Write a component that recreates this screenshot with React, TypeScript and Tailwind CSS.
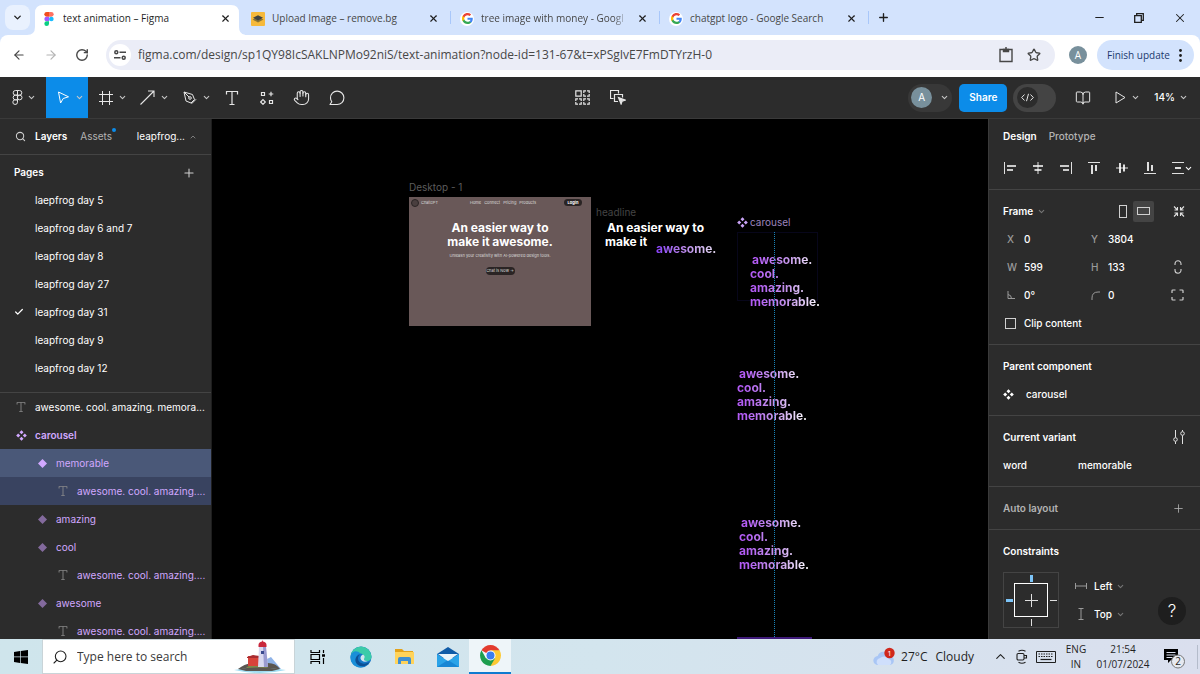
import React, { useState } from 'react';
import {
  ArrowLeft,
  ArrowRight,
  BookOpen,
  Check,
  ChevronDown,
  ChevronUp,
  Hand,
  Minus,
  Plus,
  RotateCw,
  Search,
  Star,
  X,
} from 'lucide-react';

const tabs = [
  { title: 'text animation – Figma', icon: 'figma', style: 'text-[#1f1f1f]' },
  { title: 'Upload Image – remove.bg', icon: 'removebg', style: 'text-[#474747]' },
  { title: 'tree image with money - Googl', icon: 'google', style: 'text-[#474747] mask-r-from-90%' },
  { title: 'chatgpt logo - Google Search', icon: 'google', style: 'text-[#474747]' },
];

const pages = [
  'laepfrog day 5',
  'leapfrog day 6 and 7',
  'leapfrog day 8',
  'leapfrog day 27',
  'leapfrog day 31',
  'leapfrog day 9',
  'leapfrog day 12',
];

const layers = [
  { name: 'awesome. cool. amazing. memora...', icon: 'text', row: 'pl-[14px]', text: 'text-white' },
  { name: 'carousel', icon: 'set', row: 'pl-[14px]', text: 'text-[#d1a8ff] font-semibold' },
  { name: 'memorable', icon: 'variant', row: 'pl-[35px] bg-[#4a5878]', text: 'text-[#d1a8ff]' },
  { name: 'awesome. cool. amazing....', icon: 'text', row: 'pl-[56px] bg-[#394360]', text: 'text-[#d1a8ff]' },
  { name: 'amazing', icon: 'dim', row: 'pl-[35px]', text: 'text-[#d1a8ff]' },
  { name: 'cool', icon: 'dim', row: 'pl-[35px]', text: 'text-[#d1a8ff]' },
  { name: 'awesome. cool. amazing....', icon: 'text', row: 'pl-[56px]', text: 'text-[#d1a8ff]' },
  { name: 'awesome', icon: 'dim', row: 'pl-[35px]', text: 'text-[#d1a8ff]' },
  { name: 'awesome. cool. amazing....', icon: 'text', row: 'pl-[56px]', text: 'text-[#d1a8ff]' },
];

/* ---------- icons ---------- */

function FigmaLogo() {
  return (
    <svg width="10" height="14" viewBox="0 0 20 30">
      <path d="M5 0h5v10H5A5 5 0 0 1 5 0z" fill="#f24e1e" />
      <path d="M10 0h5a5 5 0 0 1 0 10h-5z" fill="#ff7262" />
      <path d="M5 10h5v10H5a5 5 0 0 1 0-10z" fill="#a259ff" />
      <circle cx="15" cy="15" r="5" fill="#1abcfe" />
      <path d="M5 20h5v5a5 5 0 1 1-5-5z" fill="#0acf83" />
    </svg>
  );
}

function GoogleLogo() {
  return (
    <span className="flex size-[14px] items-center justify-center rounded-full bg-white">
      <svg width="11" height="11" viewBox="0 0 24 24">
        <path d="M23.5 12.3c0-.9-.1-1.5-.2-2.2H12v4.5h6.5c-.3 1.6-1.2 2.9-2.5 3.7v3.1h4c2.3-2.2 3.5-5.3 3.5-9.1z" fill="#4285f4" />
        <path d="M12 24c3.2 0 6-1.1 7.9-2.9l-3.9-3.1c-1.1.7-2.4 1.2-4 1.2-3.1 0-5.8-2.1-6.7-4.9H1.3v3.2A12 12 0 0 0 12 24z" fill="#34a853" />
        <path d="M5.3 14.3a7.2 7.2 0 0 1 0-4.6V6.5H1.3a12 12 0 0 0 0 11z" fill="#fbbc05" />
        <path d="M12 4.8c1.8 0 3.3.6 4.6 1.8l3.4-3.4A12 12 0 0 0 1.3 6.5l4 3.2C6.2 6.9 8.9 4.8 12 4.8z" fill="#ea4335" />
      </svg>
    </span>
  );
}

function RemoveBgLogo() {
  return (
    <svg width="14" height="14" viewBox="0 0 14 14">
      <rect width="14" height="14" rx="1" fill="#f6b93b" />
      <path d="M1.5 7.5 7 5l5.5 2.500L7 10.5z" fill="#8a7433" />
      <path d="M2 5.8 7 3.3l5 2.500-5 2.800z" fill="#3f4342" />
    </svg>
  );
}

function Favicon({ icon }: { icon: string }) {
  return (
    <span className="flex w-4 shrink-0 justify-center">
      {icon === 'figma' && <FigmaLogo />}
      {icon === 'removebg' && <RemoveBgLogo />}
      {icon === 'google' && <GoogleLogo />}
    </span>
  );
}

function Caret({ className = 'text-[#c8c8c8]' }: { className?: string }) {
  return <ChevronDown size={9} strokeWidth={2.8} className={`shrink-0 ${className}`} />;
}

function FigmaMark() {
  return (
    <svg width="11" height="15" viewBox="0 0 11 15" fill="none" stroke="#e6e6e6">
      <path d="M5.5.5h-2a2.33 2.33 0 0 0 0 4.67h2zM5.5.5h2a2.33 2.33 0 0 1 0 4.67h-2zM5.5 5.17h-2a2.33 2.33 0 0 0 0 4.66h2zM5.5 9.83h-2a2.33 2.33 0 1 0 2 2.33z" />
      <circle cx="7.7" cy="7.5" r="2.33" />
    </svg>
  );
}

function MoveIcon() {
  return (
    <svg width="13" height="13" viewBox="0 0 13 13" fill="none" stroke="#fff" strokeLinejoin="round">
      <path d="M1.5 1 11.5 5.8 6.2 7.5 3.6 12z" />
    </svg>
  );
}

function FrameIcon() {
  return (
    <svg width="14" height="14" viewBox="0 0 14 14" stroke="#e6e6e6">
      <path d="M3.5 0v14M10.5 0v14M0 3.5h14M0 10.5h14" />
    </svg>
  );
}

function ArrowIcon() {
  return (
    <svg width="15" height="15" viewBox="0 0 15 15" fill="none" stroke="#e6e6e6" strokeWidth="1.1">
      <path d="M.5 14.5 14 1M8 1h6v6" />
    </svg>
  );
}

function PenIcon() {
  return (
    <svg width="14" height="14" viewBox="0 0 14 14" fill="none" stroke="#e6e6e6" strokeLinejoin="round">
      <path d="M1 1l8.500 2.500 2 5-3.500 3.500-5-2zM1 1l5.200 5.200M8.500 12.800l4.500-4.500" />
      <circle cx="7" cy="7" r="1.3" />
    </svg>
  );
}

function TextIcon({ size = 14, color = '#e6e6e6' }: { size?: number; color?: string }) {
  return (
    <svg width={size} height={size} viewBox="0 0 14 14" fill="none" stroke={color} strokeWidth="1.2">
      <path d="M1.5 3.5v-3h11v3M7 .5v13M4.500 13.5h5" />
    </svg>
  );
}

function ResourcesIcon() {
  return (
    <svg width="14" height="14" viewBox="0 0 14 14" fill="none" stroke="#e6e6e6" strokeWidth="1.2">
      <path d="M1.500 1.500h3v3h-3zM9.500 9.500h3v3h-3zM11 .7v4.600M8.700 3h4.600M3 8.700 5.300 11 3 13.300.7 11z" />
    </svg>
  );
}

function CommentIcon() {
  return (
    <svg width="16" height="16" viewBox="0 0 16 16" fill="none" stroke="#e6e6e6" strokeWidth="1.1">
      <path d="M1 14.500h7.200A6.700 6.700 0 1 0 1.500 8c0 1.500.5 2.700 1.300 3.800L1 14.500z" strokeLinejoin="round" />
    </svg>
  );
}

function GridIcon() {
  return (
    <svg width="15" height="15" viewBox="0 0 15 15" fill="none" stroke="#e6e6e6" strokeWidth="1.2">
      <path d="M.8.8h5.400v5.400H.8z" />
      <path d="M8.800 3V.8H11M12 .8h2.200V3M14.200 4v2.200H12M11 6.200H8.800V4M.8 11V8.800H3M4 8.800h2.200V11M6.200 12v2.200H4M3 14.200H.8V12M8.800 11V8.800H11M12 8.800h2.200V11M14.200 12v2.200H12M11 14.200H8.800V12" />
    </svg>
  );
}

function BooleanIcon() {
  return (
    <svg width="16" height="15" viewBox="0 0 16 15" fill="none" stroke="#e6e6e6" strokeWidth="1.2">
      <path d="M3.500 8.500h-3v-8h8v3M8 11.500H4.500v-7h8v3" />
      <path d="m8.500 7.500 6.500 2.600-2.900 1-1 2.900z" fill="#e6e6e6" />
    </svg>
  );
}

function ComponentSet({ color }: { color: string }) {
  return (
    <svg width="11" height="11" viewBox="0 0 12 12" fill={color}>
      <path d="M6 .2 8.200 2.400 6 4.600 3.800 2.400zM6 7.400 8.200 9.600 6 11.800 3.800 9.600zM2.400 3.800 4.600 6 2.400 8.200.2 6zM9.600 3.800 11.800 6 9.600 8.200 7.400 6z" />
    </svg>
  );
}

function Diamond({ color }: { color: string }) {
  return (
    <svg width="9" height="9" viewBox="0 0 10 10" fill={color}>
      <path d="M5 0l5 5-5 5-5-5z" />
    </svg>
  );
}

function LayerIcon({ icon }: { icon: string }) {
  return (
    <span className="flex w-[14px] shrink-0 justify-center">
      {icon === 'text' && <TextIcon size={10} color="#8c8c8c" />}
      {icon === 'set' && <ComponentSet color="#d1a8ff" />}
      {icon === 'variant' && <Diamond color="#d1a8ff" />}
      {icon === 'dim' && <Diamond color="#836a9d" />}
    </span>
  );
}

const alignIcons = [
  { label: 'Align left', d: 'M.5 0v12', bars: 'M3 4h9M3 8h6' },
  { label: 'Align horizontal centers', d: 'M6 0v12', bars: 'M1 4h10M2.5 8h7' },
  { label: 'Align right', d: 'M11.5 0v12', bars: 'M0 4h9M3 8h6' },
  { label: 'Align top', d: 'M0 .5h12', bars: 'M4 3v9M8 3v6' },
  { label: 'Align vertical centers', d: 'M0 6h12', bars: 'M4 1v10M8 2.5v7' },
  { label: 'Align bottom', d: 'M0 11.5h12', bars: 'M4 0v9M8 3v6' },
  { label: 'Distribute', d: 'M0 .5h12M0 11.5h12', bars: 'M3 6h6' },
];

/* ---------- browser ---------- */

function TabStrip() {
  return (
    <div className="flex h-[35px] shrink-0 bg-[#d3e3fd] pl-[5px]">
      <button aria-label="Search tabs" className="mt-[5px] mr-[3px] flex size-[25px] shrink-0 items-center justify-center rounded-lg bg-[#e9f1fe] text-[#1f1f1f]">
        <ChevronDown size={11} strokeWidth={3} />
      </button>
      {tabs.map((tab, i) => (
        <div key={i} className="relative flex w-[209px] min-w-0 items-end">
          {i === 0 && (
            <svg className="absolute -left-[6px] bottom-0" width="218" height="30" viewBox="0 0 218 30" fill="#fff">
              <path d="M0 30q8 0 8-8V8q0-8 8-8h188q8 0 8 8v14q0 8 8 8z" />
            </svg>
          )}
          <div className="relative flex h-[30px] min-w-0 flex-1 items-center gap-[6px] pr-[9px] pb-[3px] pl-2">
            <Favicon icon={tab.icon} />
            <span className={`flex-1 overflow-hidden text-[10px] whitespace-nowrap ${tab.style}`}>{tab.title}</span>
            <button aria-label="Close tab" className="flex size-4 shrink-0 items-center justify-center text-[#1f1f1f]">
              <X size={11} strokeWidth={2.5} />
            </button>
          </div>
          {i > 0 && <span className="mb-[11px] h-[13px] w-px bg-[#a8c7fa]" />}
        </div>
      ))}
      <button aria-label="New tab" className="flex w-[29px] items-center justify-center text-[#1f1f1f]">
        <Plus size={13} strokeWidth={2.5} />
      </button>
      <div className="ml-auto flex text-[#1f1f1f]">
        <button aria-label="Minimize" className="flex w-10 items-center justify-center"><Minus size={13} /></button>
        <button aria-label="Restore" className="flex w-10 items-center justify-center">
          <svg width="10" height="10" viewBox="0 0 10 10" fill="none" stroke="currentColor" strokeWidth="1.3">
            <path d="M.7 2.700h6.600v6.600H.7zM2.700 2.500V.7h6.600v6.600H7.500" />
          </svg>
        </button>
        <button aria-label="Close" className="flex w-[41px] items-center justify-center"><X size={14} strokeWidth={1.8} /></button>
      </div>
    </div>
  );
}

function AddressBar() {
  return (
    <div className="flex h-[42px] shrink-0 items-center rounded-t-lg bg-white pb-[2px]">
      <div className="flex w-[106px] shrink-0 justify-between pr-[17px] pl-3 text-[#474747]">
        <button aria-label="Back"><ArrowLeft size={14} /></button>
        <button aria-label="Forward" className="text-[#b4b4b4]"><ArrowRight size={14} /></button>
        <button aria-label="Reload"><RotateCw size={14} strokeWidth={2.4} /></button>
      </div>
      <div className="flex h-[30px] flex-1 items-center rounded-full bg-[#ebedf7] pr-[14px] pl-[3px]">
        <button aria-label="Site information" className="flex size-[22px] items-center justify-center rounded-full bg-white">
          <svg width="12" height="10" viewBox="0 0 12 10" fill="none" stroke="#474747" strokeWidth="1.5">
            <circle cx="2.3" cy="2.3" r="1.5" /><path d="M5.500 2.300H12M0 7.700h6.500" /><circle cx="9.7" cy="7.7" r="1.5" />
          </svg>
        </button>
        <input
          aria-label="Address"
          className="mx-[7px] min-w-0 flex-1 bg-transparent text-[12px] text-[#474747] outline-none"
          defaultValue="figma.com/design/sp1QY98IcSAKLNPMo92niS/text-animation?node-id=131-67&t=xPSgIvE7FmDTYrzH-0"
        />
        <button aria-label="Clipboard" className="mr-[14px]">
          <svg width="14" height="16" viewBox="0 0 14 16" fill="none" stroke="#474747" strokeWidth="1.4">
            <path d="M1 2.500h12v12H1z" /><path d="M4.500 2.500h5v2h-5z" fill="#474747" /><path d="M6 1h2" />
          </svg>
        </button>
        <button aria-label="Bookmark" className="text-[#474747]"><Star size={14} strokeWidth={2.3} /></button>
      </div>
      <button aria-label="Profile" className="mr-[10px] ml-[14px] flex size-[18px] items-center justify-center rounded-full bg-[#78909c] text-[10px] text-white">
        A
      </button>
      <button className="mr-[6px] flex h-[30px] w-[97px] items-center justify-between rounded-full bg-[#d3e3fd] pr-3 pl-[10px] text-[10px] whitespace-nowrap text-[#1c3a6e]">
        Finish update
        <svg width="3" height="13" viewBox="0 0 3 13" fill="#1f1f1f">
          <circle cx="1.5" cy="1.5" r="1.4" /><circle cx="1.5" cy="6.5" r="1.4" /><circle cx="1.5" cy="11.5" r="1.4" />
        </svg>
      </button>
    </div>
  );
}

/* ---------- figma toolbar ---------- */

function Tool({ label, menu, active, children }: { label: string; menu?: boolean; active?: boolean; children: React.ReactNode }) {
  return (
    <button
      aria-label={label}
      className={`flex h-full items-center justify-center ${menu ? 'w-[42px] gap-[5px] pl-[7px]' : 'w-[35px]'} ${active ? 'bg-[#0c8ce9]' : ''}`}
    >
      {children}
      {menu && <Caret />}
    </button>
  );
}

function Toolbar() {
  return (
    <div className="flex h-[42px] shrink-0 border-b border-[#3a3a3a] bg-[#2c2c2c] text-[10px] text-white">
      <div className="flex flex-1">
        <button aria-label="Main menu" className="flex h-full w-[46px] items-center gap-1 pl-3">
          <FigmaMark />
          <Caret />
        </button>
        <Tool label="Move" menu active><MoveIcon /></Tool>
        <Tool label="Frame tool" menu><FrameIcon /></Tool>
        <Tool label="Arrow tool" menu><ArrowIcon /></Tool>
        <Tool label="Pen tool" menu><PenIcon /></Tool>
        <Tool label="Text tool"><TextIcon /></Tool>
        <Tool label="Resources"><ResourcesIcon /></Tool>
        <Tool label="Hand tool"><Hand size={17} strokeWidth={1.5} color="#e6e6e6" /></Tool>
        <Tool label="Comment"><CommentIcon /></Tool>
      </div>
      <div className="flex">
        <Tool label="Variants"><GridIcon /></Tool>
        <Tool label="Boolean groups"><BooleanIcon /></Tool>
      </div>
      <div className="flex flex-1 items-center justify-end">
        <button aria-label="Account" className="mr-[7px] flex h-7 w-11 items-center gap-2 rounded-full bg-[#383838] pl-[3px]">
          <span className="flex size-[21px] items-center justify-center rounded-full bg-[#78909c] text-[10px]">A</span>
          <Caret />
        </button>
        <button className="mr-[6px] h-7 rounded-[5px] bg-[#0c8ce9] px-[10px] font-semibold">Share</button>
        <button role="switch" aria-checked="false" aria-label="Dev Mode" className="mr-[19px] flex h-7 w-[43px] items-center rounded-full bg-[#444] pl-1">
          <span className="flex size-[21px] items-center justify-center rounded-full bg-[#2c2c2c]">
            <svg width="13" height="9" viewBox="0 0 13 9" fill="none" stroke="#e6e6e6">
              <path d="M3.500 1.500.7 4.500l2.800 3M9.500 1.500l2.800 3-2.800 3M7.500.8l-2 7.400" />
            </svg>
          </span>
        </button>
        <button aria-label="Library" className="mr-6"><BookOpen size={16} strokeWidth={1.5} color="#e6e6e6" /></button>
        <button aria-label="Present" className="mr-[14px] flex items-center gap-[5px]">
          <svg width="11" height="13" viewBox="0 0 11 13" fill="none" stroke="#e6e6e6" strokeLinejoin="round">
            <path d="M1 1l9 5.500L1 12z" />
          </svg>
          <Caret />
        </button>
        <button className="mr-3 flex items-center gap-1 font-medium">
          14%
          <Caret />
        </button>
      </div>
    </div>
  );
}

/* ---------- left panel ---------- */

function LeftPanel() {
  const [current, setCurrent] = useState('leapfrog day 31');

  return (
    <aside className="flex w-[212px] shrink-0 flex-col overflow-hidden border-r border-[#1e1e1e] bg-[#2c2c2c] text-[10px] text-white">
      <div className="flex h-[35px] shrink-0 items-center pl-[15px]">
        <button aria-label="Search"><Search size={11} strokeWidth={2.3} color="#d0d0d0" /></button>
        <button className="ml-[9px] font-semibold">Layers</button>
        <button className="relative ml-[13px] text-[#b3b3b3]">
          Assets
          <span className="absolute -top-px -right-1 size-1 rounded-full bg-[#0c8ce9]" />
        </button>
        <button className="mr-[14px] ml-auto flex items-center gap-1">
          leapfrog...
          <ChevronUp size={8} strokeWidth={2.5} color="#8c8c8c" />
        </button>
      </div>
      <div className="shrink-0 border-y border-[#444] pb-[10px]">
        <div className="flex h-[31px] items-center justify-between pt-1 pr-[15px] pl-[14px]">
          <h2 className="font-semibold">Pages</h2>
          <button aria-label="Add page"><Plus size={14} strokeWidth={1.8} color="#d0d0d0" /></button>
        </div>
        <ul>
          {pages.map((page) => (
            <li key={page}>
              <button className="flex h-7 w-full items-center pl-[14px] text-left" onClick={() => setCurrent(page)}>
                <span className="w-[21px]">{page === current && <Check size={10} strokeWidth={3} />}</span>
                {page}
              </button>
            </li>
          ))}
        </ul>
      </div>
      <ul className="min-h-0">
        {layers.map((layer, i) => (
          <li key={i} className={`flex h-7 items-center gap-[7px] whitespace-nowrap ${layer.row} ${layer.text}`}>
            <LayerIcon icon={layer.icon} />
            {layer.name}
          </li>
        ))}
      </ul>
    </aside>
  );
}

/* ---------- canvas ---------- */

function WordStack({ place }: { place: string }) {
  return (
    <div className={`absolute bg-linear-to-r from-[#b45cf6] from-10% via-[#c596ea] via-55% to-white bg-clip-text text-[12px] leading-[14px] font-bold text-transparent ${place}`}>
      <p className="pl-[2px]">awesome.</p>
      <p>cool.</p>
      <p>amazing.</p>
      <p>memorable.</p>
    </div>
  );
}

function Canvas() {
  return (
    <main className="relative min-w-0 flex-1 overflow-hidden bg-black text-white">
      <p className="absolute top-[61px] left-[197px] text-[10px] leading-[14px] text-[#5c5c5c]">Desktop - 1</p>
      <section className="absolute top-[78px] left-[197px] flex h-[129px] w-[182px] flex-col items-center bg-[#695858]">
        <div className="flex h-[11px] w-full items-center pr-[9px] pl-[2px] text-[4px] text-[#ddd]">
          <span className="size-2 rounded-full border border-[#2a2424] bg-[#4a3f3f]" />
          <span className="ml-[2px]">ChatGPT</span>
          <nav className="ml-8 flex gap-[3px]">
            <a href="#home">Home</a>
            <a href="#connect">Connect</a>
            <a href="#pricing">Pricing</a>
            <a href="#products">Products</a>
          </nav>
          <button className="ml-auto h-[7px] w-[18px] rounded-full bg-[#2a2424] text-[4px] leading-[7px] font-bold text-white">Login</button>
        </div>
        <h1 className="mt-[13px] text-center text-[12px] leading-[14px] font-bold">
          An easier way to
          <br />
          make it awesome.
        </h1>
        <p className="mt-[4px] text-[4px] leading-[6px] text-[#ddd]">Unleash your creativity with AI-powered design tools.</p>
        <button className="mt-[8px] h-[8px] w-[29px] rounded-full bg-[#2a2424] text-[4px] leading-[8px] whitespace-nowrap text-[#ddd]">Chat is Now -&gt;</button>
      </section>

      <p className="absolute top-[86px] left-[384px] text-[10px] leading-[14px] text-[#444]">headline</p>
      <div className="absolute top-[102px] left-[393px] text-[12px] leading-[14px] font-bold whitespace-nowrap">
        <p className="pl-[2px]">An easier way to</p>
        <p>make it</p>
      </div>
      <p className="absolute top-[123px] left-[444px] bg-linear-to-r from-[#8a3ffc] via-[#b27ae8] via-40% to-[#e6dcf2] bg-clip-text text-[12px] leading-[14px] font-bold text-transparent">
        awesome.
      </p>

      <p className="absolute top-[96px] left-[525px] flex items-center gap-[2px] text-[10px] leading-[14px] text-[#9d84bd]">
        <ComponentSet color="#c9a3f5" />
        carousel
      </p>
      <div className="absolute top-[113px] left-[525px] h-[69px] w-[81px] border border-[#07061a]" />
      <WordStack place="top-[134px] left-[538px]" />
      <WordStack place="top-[248px] left-[525px]" />
      <WordStack place="top-[397px] left-[527px]" />
      <div className="absolute top-[113px] bottom-0 left-[562px] border-l border-dotted border-[#1883b8]" />
      <div className="absolute bottom-0 left-[525px] h-[2px] w-[75px] bg-[#3f1a7a]" />
    </main>
  );
}

/* ---------- right panel ---------- */

function Field({ id, label, value }: { id: string; label: React.ReactNode; value: string }) {
  return (
    <div className="flex h-7 w-[84px] items-center">
      <label htmlFor={id} aria-label={id} className="flex w-[21px] justify-start pl-1 text-[#9a9a9a]">{label}</label>
      <input id={id} defaultValue={value} className="w-14 bg-transparent outline-none" />
    </div>
  );
}

function Constraint({ id, label, value, width, icon }: { id: string; label: string; value: string; width: string; icon: string }) {
  return (
    <div className="flex h-7 items-center">
      <svg width="12" height="12" viewBox="0 0 12 12" fill="none" stroke="#9a9a9a"><path d={icon} /></svg>
      <select id={id} aria-label={label} defaultValue={value} className={`ml-[7px] appearance-none bg-transparent outline-none ${width}`}>
        <option>{value}</option>
      </select>
      <Caret className="text-[#777]" />
    </div>
  );
}

function RightPanel() {
  return (
    <aside className="relative w-[212px] shrink-0 overflow-hidden border-l border-[#3a3a3a] bg-[#2c2c2c] text-[10px] font-medium text-white">
      <div className="border-b border-[#444] pb-[7px]">
        <div className="flex h-[35px] items-center gap-3 pl-[14px]">
          <button className="font-semibold">Design</button>
          <button className="text-[#b3b3b3]">Prototype</button>
        </div>
        <div className="flex h-7 items-center pl-px">
          {alignIcons.map((item) => (
            <button key={item.label} aria-label={item.label} className="flex h-7 w-7 items-center justify-center pl-3">
              <svg className="shrink-0" width="12" height="12" viewBox="0 0 12 12" fill="none" stroke="#e0e0e0">
                <path d={item.d} />
                <path d={item.bars} strokeWidth="1.7" stroke="#fff" />
              </svg>
            </button>
          ))}
          <Caret className="-ml-[2px]" />
        </div>
      </div>

      <section className="border-b border-[#444] py-[7px] pl-[14px]">
        <div className="flex h-7 items-center">
          <button className="flex items-center gap-1 font-semibold">
            Frame
            <Caret className="text-[#777]" />
          </button>
          <div className="mr-[14px] ml-auto flex items-center">
            <button aria-label="Portrait" className="flex size-[21px] items-center justify-center">
              <span className="h-[13px] w-2 border border-[#d0d0d0]" />
            </button>
            <button aria-label="Landscape" className="flex size-[21px] items-center justify-center rounded-[2px] bg-[#444]">
              <span className="h-2 w-[13px] border border-[#d0d0d0]" />
            </button>
            <button aria-label="Resize to fit" className="ml-[18px]">
              <svg width="14" height="11" viewBox="0 0 13 11" fill="none" stroke="#e0e0e0" strokeWidth="1.1">
                <path d="M1.500.5l3 3M2 4h3V1M11.500.5l-3 3M11 4H8V1M1.500 10.500l3-3M2 7h3v3M11.500 10.500l-3-3M11 7H8v3" />
              </svg>
            </button>
          </div>
        </div>
        <div className="flex">
          <Field id="x" label="X" value="0" />
          <Field id="y" label="Y" value="3804" />
        </div>
        <div className="flex items-center">
          <Field id="w" label="W" value="599" />
          <Field id="h" label="H" value="133" />
          <button aria-label="Constrain proportions" className="ml-[3px]">
            <svg width="8" height="14" viewBox="0 0 8 14" fill="none" stroke="#d0d0d0" strokeWidth="1.1">
              <path d="M1 5V3.800a3 3 0 0 1 6 0V5M1 9v1.200a3 3 0 0 0 6 0V9" />
            </svg>
          </button>
        </div>
        <div className="flex items-center">
          <Field
            id="rotation"
            value="0°"
            label={<svg width="8" height="8" viewBox="0 0 8 8" fill="none" stroke="#9a9a9a"><path d="M1 0v7.500h7M1 3.500a4 4 0 0 1 3.500 4" /></svg>}
          />
          <Field
            id="radius"
            value="0"
            label={<svg width="9" height="9" viewBox="0 0 9 9" fill="none" stroke="#9a9a9a"><path d="M1 9V7q0-6 6-6h2" /></svg>}
          />
          <button aria-label="Independent corners">
            <svg width="13" height="12" viewBox="0 0 13 12" fill="none" stroke="#d0d0d0" strokeWidth="1.2">
              <path d="M1 4V1.800Q1 1 1.800 1H4.500M8.500 1h2.700q.8 0 .8.800V4M12 8v2.200q0 .8-.8.800H8.500M4.500 11H1.800Q1 11 1 10.200V8" />
            </svg>
          </button>
        </div>
        <label className="flex h-7 items-center gap-2 pl-[2px]">
          <input type="checkbox" className="size-[11px] appearance-none border border-[#d0d0d0]" />
          Clip content
        </label>
      </section>

      <section className="border-b border-[#444] py-[7px] pl-[14px]">
        <h2 className="flex h-7 items-center font-semibold">Parent component</h2>
        <button className="flex h-7 items-center gap-3">
          <ComponentSet color="#fff" />
          carousel
        </button>
      </section>

      <section className="border-b border-[#444] py-[7px] pl-[14px]">
        <div className="flex h-7 items-center justify-between pr-[15px]">
          <h2 className="font-semibold">Current variant</h2>
          <button aria-label="Edit variants">
            <svg width="12" height="14" viewBox="0 0 12 14" fill="none" stroke="#e0e0e0">
              <path d="M2.500 0v7.500M2.500 11.500V14M9.500 5.500V14M9.500 0v1.500" /><circle cx="2.5" cy="9.5" r="1.8" /><circle cx="9.5" cy="3.5" r="1.8" />
            </svg>
          </button>
        </div>
        <div className="flex h-7 items-center">
          <label htmlFor="word" className="w-[75px]">word</label>
          <input id="word" defaultValue="memorable" className="w-24 bg-transparent outline-none" />
        </div>
      </section>

      <section className="border-b border-[#444] py-[7px] pl-[14px]">
        <div className="flex h-7 items-center justify-between pr-[15px]">
          <h2 className="font-semibold text-[#b3b3b3]">Auto layout</h2>
          <button aria-label="Add auto layout"><Plus size={13} strokeWidth={1.5} color="#b3b3b3" /></button>
        </div>
      </section>

      <section className="py-[7px] pl-[14px]">
        <h2 className="flex h-7 items-center font-semibold">Constraints</h2>
        <div className="mt-[7px] flex items-start gap-4">
          <svg width="56" height="56" viewBox="0 0 56 56" fill="none" stroke="#e0e0e0">
            <rect x=".5" y=".5" width="55" height="55" stroke="#444" />
            <rect x="11.5" y="11.5" width="33" height="33" stroke="#fff" />
            <path d="M28.500 22v13M22 28.500h13M28.500 47v7M47 28.500h7" />
            <path d="M28.500 3v7M3 28.500h7" stroke="#7cc4f8" strokeWidth="3" />
          </svg>
          <div>
            <Constraint id="cx" label="Horizontal constraint" value="Left" width="w-[22px]" icon="M.5 3v6M11.500 3v6M.5 6h11" />
            <Constraint id="cy" label="Vertical constraint" value="Top" width="w-[22px]" icon="M3.500.5h5M3.500 11.500h5M6 .5v11" />
          </div>
        </div>
      </section>

      <button aria-label="Help" className="absolute right-[14px] bottom-[14px] size-7 rounded-full bg-[#1e1e1e] text-[17px] leading-7 font-light">?</button>
    </aside>
  );
}

/* ---------- taskbar ---------- */

function Lighthouse() {
  return (
    <svg width="54" height="34" viewBox="0 0 54 34">
      <path d="M8 29 22 19l6 3 10-5 10 12z" fill="#8fb3e8" />
      <path d="M5 29q8-6 14-5l8-2 8 1q8 0 12 6z" fill="#5b5650" />
      <path d="M14 27q6-4 12-3l12 5H12z" fill="#7d8a4a" />
      <path d="M1 30q26-4 52 0-26 6-52 0z" fill="#9fdcf2" />
      <path d="M5 29q22-3 42 0l-8 2H13z" fill="#5b5650" />
      <path d="M15 16h12v10H15z" fill="#d8433a" /><path d="M14 17l6-2 7 1v2H14z" fill="#a92c30" />
      <path d="M26 7h7l2 20H25z" fill="#d9d9f0" /><path d="M30 7h3l2 20h-4z" fill="#9a9bd0" />
      <path d="M25.500 5q0-3 3.500-3.500L29.500 0l.5 1.500Q33.500 2 33.500 5v2h-8z" fill="#c9283c" /><path d="M28 11h3v3h-3z" fill="#3a4a8f" />
    </svg>
  );
}

function Taskbar() {
  return (
    <footer className="flex h-[35px] shrink-0 items-center bg-linear-to-r from-[#cfe5ec] via-[#d3e5ee] to-[#dadfee] text-[11px] text-[#1f1f1f]">
      <button aria-label="Start" className="flex w-[42px] justify-center">
        <svg width="14" height="14" viewBox="0 0 14 14" fill="#000">
          <path d="M0 2l6-.9v5.500H0zM6.700 1 14 0v6.600H6.700zM0 7.300h6v5.600L0 12zM6.700 7.300H14V14l-7.300-1z" />
        </svg>
      </button>
      <div className="flex h-full w-[253px] items-center border border-[#c9d4d8] bg-white pl-[9px]">
        <Search size={16} strokeWidth={1.6} className="-scale-x-100" />
        <input aria-label="Search" placeholder="Type here to search" className="ml-[9px] w-0 flex-1 bg-transparent text-[12px] outline-none placeholder:text-[#3a3a3a]" />
        <span className="mr-[7px] self-start"><Lighthouse /></span>
      </div>
      <button aria-label="Task view" className="flex w-[45px] justify-center">
        <svg width="15" height="14" viewBox="0 0 15 14" fill="none" stroke="#000" strokeWidth="1.2">
          <path d="M1 0v2.500h8.500V0M1 14v-2.500h8.500V14M1 4.500h8.500v5H1zM13.500 0v3M13.500 8v6" /><path d="M12 5.500h3" strokeWidth="2.5" />
        </svg>
      </button>
      <button aria-label="Edge" className="flex w-[42px] justify-center">
        <svg width="22" height="22" viewBox="0 0 22 22">
          <circle cx="11" cy="11" r="10.5" fill="#1478c8" />
          <path d="M.6 10A10.500 10.500 0 0 1 21.500 10c.3 3-1.800 5-4.500 5-2 0-3.500-.8-3-2 1-3-1-5.500-4-5.500C6 6.500 2 7.500.6 10z" fill="#3ccba8" />
          <path d="M.6 10C2 4.500 7 4 10.500 7.500 7 7.500 5.500 11 6.500 14.500c1 3.500 4 5.500 7 6.500C5 23-.5 17 .6 10z" fill="#1a8fd8" />
          <path d="M10 8.500c-3 2-2.500 7 1 8.500 3 1.300 6.500.5 9-1.500-3 5-8.500 6-12 3.500-4-3-3.500-9 2-10.500z" fill="#0d4f94" />
          <path d="M13 8.500c2 1 2 3 1 4.500-.5 1.500 2 2.200 4 1.900-3 1.600-7 .6-7.500-2.400-.2-1.800.8-3.300 2.500-4z" fill="#d3e5ee" />
        </svg>
      </button>
      <button aria-label="File Explorer" className="flex w-[44px] justify-center">
        <svg width="19" height="17" viewBox="0 0 19 17">
          <path d="M0 1h7l2 2h9v5H0z" fill="#e3a21a" /><path d="M0 4h19v12H0z" fill="#ffd35a" />
          <path d="M3 16v-5q0-2 2-2h9q2 0 2 2v5h-3v-3H6v3z" fill="#3f8fd2" />
        </svg>
      </button>
      <button aria-label="Mail" className="flex w-[43px] justify-center">
        <svg width="22" height="20" viewBox="0 0 22 20">
          <path d="M0 7 11 0l11 7v4H0z" fill="#0f5ba7" />
          <path d="M0 7l11 7 11-7v13H0z" fill="#2aa3e8" /><path d="M0 20 11 13l11 7z" fill="#1786d4" />
          <path d="M1 7h20l-10 7z" fill="#e8f3fa" />
        </svg>
      </button>
      <button aria-label="Chrome" className="flex h-full w-[42px] items-center justify-center border-b-2 border-[#0f7bd0] bg-[#eef5f9]">
        <svg width="21" height="21" viewBox="0 0 22 22">
          <path d="M11 11 1.500 5.500A11 11 0 0 1 20.500 5.500z" fill="#e33b2e" />
          <path d="M11 11V5.500h9.500A11 11 0 0 1 11 22z" fill="#fcc934" />
          <path d="M11 11 15.800 13.800 11 22A11 11 0 0 1 1.500 5.500l4.700 8.300z" fill="#1e9e4f" />
          <circle cx="11" cy="11" r="5.3" fill="#fff" /><circle cx="11" cy="11" r="4.2" fill="#3a7df0" />
        </svg>
      </button>

      <button className="ml-auto flex items-center whitespace-nowrap">
        <svg className="mr-[5px]" width="23" height="20" viewBox="0 0 23 20">
          <path d="M5 18a4.500 4.500 0 0 1-.3-9A6 6 0 0 1 16 8.500 4.800 4.800 0 0 1 17 18z" fill="#a9c6f5" />
          <path d="M5 18a4 4 0 0 1 2-7 6 6 0 0 1 9 1 3.500 3.500 0 0 1 1 6z" fill="#cfdffc" />
          <circle cx="16.5" cy="6" r="5.2" fill="#d0281c" />
          <text x="16.5" y="9" fontSize="8" fill="#fff" textAnchor="middle">1</text>
        </svg>
        <span className="text-[12px]">27°C</span>
        <span className="ml-2 text-[12px]">Cloudy</span>
      </button>
      <button aria-label="Show hidden icons" className="ml-[19px]"><ChevronUp size={15} strokeWidth={1.8} /></button>
      <button aria-label="Meet now" className="ml-2">
        <svg width="12" height="15" viewBox="0 0 12 15" fill="none" stroke="#1f1f1f" strokeWidth="1.1">
          <rect x="1" y="4.5" width="7" height="6.5" rx="1.2" /><path d="M8 6.500h2.500v2.500H8M2.500 2.200q3.500-2 7 0M2.500 13.300q3.500 2 7 0" />
        </svg>
      </button>
      <button aria-label="Touch keyboard" className="ml-2">
        <svg width="20" height="12" viewBox="0 0 20 12" fill="none" stroke="#1f1f1f">
          <path d="M.5.500h19v11H.5z" /><path d="M2.500 3h15M2.500 5.500h15" strokeWidth="1.2" strokeDasharray="1.500 1" /><path d="M4.500 8.500h11" strokeWidth="1.2" />
        </svg>
      </button>
      <button className="ml-[9px] w-[22px] text-center text-[10px] leading-[15px]">
        ENG
        <br />
        IN
      </button>
      <button className="ml-[9px] w-[54px] text-center text-[10px] leading-[15px] whitespace-nowrap">
        21:54
        <br />
        01/07/2024
      </button>
      <button aria-label="Notifications" className="mr-[2px] ml-[14px] border-r border-[#b4bccb] pr-[11px]">
        <svg width="22" height="24" viewBox="0 0 22 24">
          <path d="M0 4h14v11H7l-3 3v-3H0z" fill="#000" /><path d="M2.500 7.500h9M2.500 10h9M2.500 12.500h6" stroke="#dadfee" />
          <circle cx="14" cy="16.5" r="6.5" fill="#e6e9f0" stroke="#777" />
          <text x="14" y="20" fontSize="10" fill="#1f1f1f" textAnchor="middle">2</text>
        </svg>
      </button>
    </footer>
  );
}

export default function App() {
  return (
    <div className="flex h-screen flex-col overflow-hidden bg-[#d3e3fd] font-['Open_Sans','Noto_Sans',sans-serif]">
      <TabStrip />
      <AddressBar />
      <div className="flex min-h-0 flex-1 flex-col font-['Inter','Liberation_Sans',sans-serif]">
        <Toolbar />
        <div className="flex min-h-0 flex-1">
          <LeftPanel />
          <Canvas />
          <RightPanel />
        </div>
      </div>
      <Taskbar />
    </div>
  );
}
